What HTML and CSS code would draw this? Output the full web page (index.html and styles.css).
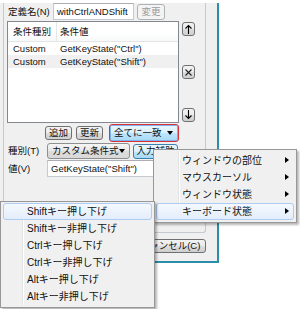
FILE: index.html
```html
<!DOCTYPE html>
<html lang="ja">
<head>
<meta charset="utf-8">
<title>条件設定</title>
<link rel="stylesheet" href="styles.css">
</head>
<body>
<div class="screen">
  <div class="dialog">
    <div class="group">
      <div class="row row-name">
        <span class="label label-name">定義名(N)</span>
        <div class="textbox name-box">withCtrlANDShift</div>
        <button class="btn btn-disabled btn-change">変更</button>
      </div>
      <div class="row row-list">
        <div class="listview">
          <div class="lv-header">
            <span class="col col-kind">条件種別</span>
            <span class="col col-value">条件値</span>
          </div>
          <div class="lv-row">
            <span class="col col-kind">Custom</span>
            <span class="col col-value">GetKeyState("Ctrl")</span>
          </div>
          <div class="lv-row lv-alt">
            <span class="col col-kind">Custom</span>
            <span class="col col-value">GetKeyState("Shift")</span>
          </div>
        </div>
        <div class="side-buttons">
          <button class="btn btn-icon"><svg width="11" height="12" viewBox="0 0 11 12"><path d="M5.5 2.5V11M2.5 5.5L5.5 2.5L8.5 5.5" fill="none" stroke="#000" stroke-width="1.1"/></svg></button>
          <button class="btn btn-icon"><svg width="11" height="12" viewBox="0 0 11 12"><path d="M2.5 3.5L8.5 9.5M8.5 3.5L2.5 9.5" fill="none" stroke="#222" stroke-width="1.1"/></svg></button>
          <button class="btn btn-icon"><svg width="11" height="12" viewBox="0 0 11 12"><path d="M5.5 1V9.5M2.5 6.5L5.5 9.5L8.5 6.5" fill="none" stroke="#000" stroke-width="1.1"/></svg></button>
        </div>
      </div>
      <div class="row row-actions">
        <button class="btn btn-add">追加</button>
        <button class="btn btn-update">更新</button>
        <div class="combo combo-match"><span class="combo-text">全てに一致</span><span class="caret-down"></span></div>
      </div>
      <div class="row row-kind">
        <span class="label label-short">種別(T)</span>
        <div class="combo combo-kind"><span class="combo-text">カスタム条件式</span><span class="caret-down"></span></div>
        <button class="btn btn-hot btn-assist">入力補助</button>
      </div>
      <div class="row row-value">
        <span class="label label-short">値(V)</span>
        <div class="textbox value-box">GetKeyState("Shift")</div>
      </div>
    </div>
    <div class="footer">
      <button class="btn btn-cancel">キャンセル(C)</button>
    </div>
  </div>

  <div class="menu menu-main">
    <div class="menu-item">ウィンドウの部位<span class="caret-right"></span></div>
    <div class="menu-item">マウスカーソル<span class="caret-right"></span></div>
    <div class="menu-item">ウィンドウ状態<span class="caret-right"></span></div>
    <div class="menu-item is-hot">キーボード状態<span class="caret-right"></span></div>
  </div>

  <div class="menu menu-sub">
    <div class="menu-item is-hot">Shiftキー押し下げ</div>
    <div class="menu-item">Shiftキー非押し下げ</div>
    <div class="menu-item">Ctrlキー押し下げ</div>
    <div class="menu-item">Ctrlキー非押し下げ</div>
    <div class="menu-item">Altキー押し下げ</div>
    <div class="menu-item">Altキー非押し下げ</div>
  </div>
</div>
</body>
</html>
```
FILE: styles.css
```css
* { box-sizing: border-box; }
html, body { margin: 0; padding: 0; background: #fff; }
body {
  font-family: "Liberation Sans", "Noto Sans CJK JP", sans-serif;
  font-size: 9.5px;
  line-height: 12px;
  color: #111;
}
.screen { position: relative; width: 300px; height: 309px; overflow: hidden; }

.dialog {
  width: 219px;
  height: 260px;
  background: #f0f0f0;
  border-right: 2px solid #2a8eab;
  border-bottom: 2px solid #2a8eab;
  padding-left: 3px;
}
.group {
  width: 203px;
  height: 230px;
  border: 1px solid #c3c9ce;
  border-top: none;
  border-radius: 0 0 3px 3px;
  padding-left: 3px;
}
.row { display: flex; align-items: center; }
.label { white-space: nowrap; padding-left: 1px; }
.label-name { width: 46px; }
.label-short { width: 40px; }

.textbox {
  background: #fff;
  border: 1px solid #c5cad1;
  border-top-color: #abadb3;
  padding-left: 3px;
  white-space: nowrap;
  overflow: hidden;
}
.btn {
  font: inherit;
  color: #111;
  margin: 0;
  padding: 0;
  border: 1px solid #707070;
  border-radius: 3px;
  background: linear-gradient(#f2f2f2 0%, #ebebeb 50%, #dddddd 51%, #cfcfcf 100%);
  display: flex;
  align-items: center;
  justify-content: center;
  white-space: nowrap;
}
.btn-disabled {
  border-color: #adb2b5;
  background: #f4f4f4;
  color: #9a9a9a;
}
.btn-hot {
  border-color: #3c7fb1;
  background: linear-gradient(#eaf6fd 0%, #d9f0fc 50%, #bee6fd 51%, #a7d9f5 100%);
}

.row-name { margin-top: 3px; height: 17px; }
.name-box { width: 81px; height: 17px; line-height: 15px; }
.btn-change { width: 28px; height: 16px; margin-left: 3px; }

.row-list { margin-top: 1px; align-items: stretch; height: 102px; }
.listview {
  width: 172px;
  background: #fff;
  border: 1px solid #828790;
}
.lv-header {
  display: flex;
  height: 20px;
  align-items: center;
  border-bottom: 1px solid #e5e5e5;
  background: linear-gradient(#ffffff, #ffffff 60%, #f7f8f9);
}
.lv-header .col-kind { border-right: 1px solid #e5e5e5; height: 100%; display: flex; align-items: center; }
.lv-row { display: flex; height: 13px; align-items: center; white-space: nowrap; }
.lv-alt { background: #f0f0f0; }
.col-kind { width: 49px; padding-left: 5px; }
.col-value { padding-left: 3px; }

.side-buttons {
  width: 13px;
  margin-left: 3px;
  padding: 1px 0;
  display: flex;
  flex-direction: column;
  justify-content: space-between;
}
.btn-icon { width: 13px; height: 14px; }

.row-actions { height: 18px; margin-top: 1px; }
.btn-add { width: 27px; height: 14px; margin-left: 38px; }
.btn-update { width: 27px; height: 14px; margin-left: 4px; }
.combo {
  display: flex;
  align-items: center;
  justify-content: space-between;
  border-radius: 3px;
  padding: 0 5px 0 4px;
  white-space: nowrap;
}
.combo-match {
  width: 70px;
  height: 18px;
  margin-left: 6px;
  border: 1px solid #d9313a;
  background: linear-gradient(#eaf6fd 0%, #d9f0fc 50%, #bee6fd 51%, #a7d9f5 100%);
  box-shadow: inset 0 0 0 1px #7eb4ea;
}
.caret-down {
  width: 0;
  height: 0;
  border-left: 3.5px solid transparent;
  border-right: 3.5px solid transparent;
  border-top: 4px solid #000;
}

.row-kind { margin-top: 1px; height: 16px; }
.combo-kind {
  width: 83px;
  height: 16px;
  border: 1px solid #8e8f8f;
  background: linear-gradient(#f6f6f6, #e6e6e6 50%, #dcdcdc 51%, #d9d9d9);
}
.btn-assist { width: 45px; height: 15px; margin-left: 3px; }

.row-value { margin-top: 1px; height: 17px; }
.value-box { width: 131px; height: 17px; line-height: 15px; }

.footer {
  width: 203px;
  margin-top: 6px;
  display: flex;
  justify-content: flex-end;
}
.btn-cancel { width: 72px; height: 14px; }

.menu {
  position: absolute;
  background: #f0f0f0;
  border: 1px solid #979797;
  box-shadow: 2px 2px 2px rgba(0, 0, 0, 0.28);
  padding: 2px;
  font-size: 10px;
}
.menu::before {
  content: "";
  position: absolute;
  top: 2px;
  bottom: 2px;
  width: 1px;
  background: #e2e3e3;
  box-shadow: 1px 0 0 #fff;
}
.menu-main { left: 153px; top: 149px; width: 144px; }
.menu-main::before { left: 24px; }
.menu-sub { left: 0; top: 201px; width: 155px; padding-top: 1px; }
.menu-sub::before { left: 21px; }

.menu-item {
  position: relative;
  height: 17px;
  line-height: 15px;
  border: 1px solid transparent;
  border-radius: 3px;
  white-space: nowrap;
}
.menu-main .menu-item { padding-left: 25px; }
.menu-sub .menu-item { padding-left: 23px; }
.menu-item.is-hot {
  border-color: #aeccf1;
  background: linear-gradient(#f5f9fe, #e3edfb);
}
.caret-right {
  position: absolute;
  right: 4px;
  top: 4px;
  width: 0;
  height: 0;
  border-top: 3.5px solid transparent;
  border-bottom: 3.5px solid transparent;
  border-left: 4px solid #000;
}
```
